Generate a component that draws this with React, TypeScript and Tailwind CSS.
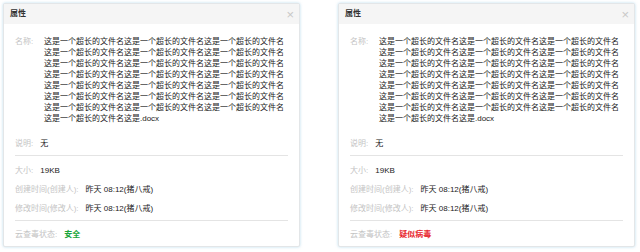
import React from "react";

const NAME = "这是一个超长的文件名".repeat(22) + "这是.docx";

function Row({ label, children, className = "" }: { label: string; children: React.ReactNode; className?: string }) {
  return (
    <div className={"flex items-baseline leading-[11px] " + className}>
      <span className="text-[8px] text-[#c4c4c4] whitespace-nowrap mr-[7px]">{label}</span>
      <span className="text-[8px] text-[#222]">{children}</span>
    </div>
  );
}

function Panel({ status, statusClass }: { status: string; statusClass: string }) {
  return (
    <div className="w-[297px] h-[244px] bg-white border border-[#e3e6e8] rounded-[2px] shadow-[0_0_3px_rgba(160,205,230,0.7)] flex flex-col">
      <div className="h-[20px] bg-[#f5f5f5] flex items-center justify-between pl-[6px] pr-[5px]">
        <span className="text-[8px] font-bold text-[#333]">属性</span>
        <span className="text-[13px] text-[#c8c8c8] leading-none">×</span>
      </div>
      <div className="px-[11px] pt-[12px]">
        <div className="flex items-baseline leading-[11px]">
          <span className="text-[8px] text-[#c4c4c4] whitespace-nowrap w-[29px] shrink-0">名称:</span>
          <span className="text-[8px] text-[#222] w-[244px] shrink-0 break-all">{NAME}</span>
        </div>
        <Row label="说明:" className="mt-[14px]">无</Row>
        <div className="h-px bg-[#e4e4e4] mt-[6px]" />
        <Row label="大小:" className="mt-[9px]">19KB</Row>
        <Row label="创建时间(创建人):" className="mt-[8px]">昨天 08:12(猪八戒)</Row>
        <Row label="修改时间(修改人):" className="mt-[8px]">昨天 08:12(猪八戒)</Row>
        <div className="h-px bg-[#e4e4e4] mt-[6px]" />
        <Row label="云查毒状态:" className="mt-[8px]">
          <span className={statusClass}>{status}</span>
        </Row>
      </div>
    </div>
  );
}

export default function App() {
  return (
    <div
      className="w-[640px] h-[252px] bg-white flex gap-[38px] pl-[3px] pt-[3px]"
      style={{ fontFamily: '"Liberation Sans", "Noto Sans CJK SC", sans-serif' }}
    >
      <Panel status="安全" statusClass="text-[#1aa53a] font-bold" />
      <Panel status="疑似病毒" statusClass="text-[#e8262e] font-bold" />
    </div>
  );
}
